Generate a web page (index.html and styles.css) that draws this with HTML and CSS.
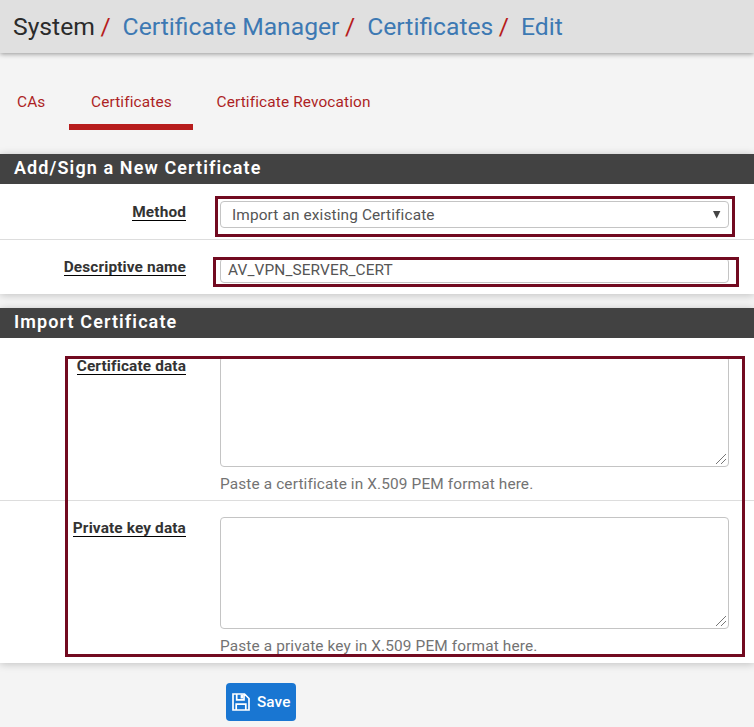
FILE: index.html
```html
<!DOCTYPE html>
<html lang="en">
<head>
<meta charset="utf-8">
<title>System: Certificate Manager</title>
<link rel="stylesheet" href="styles.css">
</head>
<body>
<header class="page-header">
  <ol class="breadcrumb">
    <li>System</li>
    <li><a>Certificate Manager</a></li>
    <li><a>Certificates</a></li>
    <li><a>Edit</a></li>
  </ol>
</header>
<nav class="tabs">
  <a class="tab">CAs</a>
  <a class="tab active">Certificates</a>
  <a class="tab">Certificate Revocation</a>
</nav>
<form>
  <section class="panel panel-new">
    <h2>Add/Sign a New Certificate</h2>
    <div class="row row-method">
      <label><span>Method</span></label>
      <div class="select"><span>Import an existing Certificate</span>
        <svg class="arrow" width="8" height="8" viewBox="0 0 8 8"><path d="M0 0H7.4L3.7 7.4Z" fill="#444"/></svg>
      </div>
      <div class="mark mark-method"></div>
    </div>
    <div class="row row-name">
      <label><span>Descriptive name</span></label>
      <div class="input">AV_VPN_SERVER_CERT</div>
      <div class="mark mark-name"></div>
    </div>
  </section>
  <section class="panel panel-import">
    <h2>Import Certificate</h2>
    <div class="row row-cert">
      <label><span>Certificate data</span></label>
      <div>
        <div class="textarea"><svg width="12" height="12" viewBox="0 0 12 12"><path d="M1 11L11 1M6 11L11 6" stroke="#777" fill="none"/></svg></div>
        <p class="help">Paste a certificate in X.509 PEM format here.</p>
      </div>
    </div>
    <div class="row row-key">
      <label><span>Private key data</span></label>
      <div>
        <div class="textarea tall"><svg width="12" height="12" viewBox="0 0 12 12"><path d="M1 11L11 1M6 11L11 6" stroke="#777" fill="none"/></svg></div>
        <p class="help">Paste a private key in X.509 PEM format here.</p>
      </div>
    </div>
    <div class="mark mark-import"></div>
  </section>
  <button class="save" type="button">
    <svg width="18" height="18" viewBox="0 0 18 18" fill="none" stroke="#fff" stroke-width="1.7"><path d="M1 1H12.5L17 5.5V17H1ZM4.2 17V11.2H13.8V17M4.7 1V6.8H12V1"/><path d="M9.8 1.5V5.5" stroke-width="2.4"/></svg>
    <span>Save</span>
  </button>
</form>
</body>
</html>
```
FILE: styles.css
```css
* { box-sizing: border-box; }
body {
  margin: 0;
  height: 727px;
  overflow: hidden;
  background: #f4f4f4;
  color: #2b2b2b;
  font: 15.4px/20px Roboto, sans-serif;
  letter-spacing: .13px;
}
.page-header {
  height: 53px;
  padding: 11px 13px;
  background: #e0e0e0;
  box-shadow: 0 1px 5px rgba(0, 0, 0, .4);
}
.breadcrumb {
  display: flex;
  margin: 0;
  padding: 0;
  list-style: none;
  font-size: 24.7px;
  line-height: 31px;
  letter-spacing: 0;
  white-space: nowrap;
}
.breadcrumb li + li::before {
  content: "/";
  color: #b71c1c;
  padding: 0 12px 0 5.5px;
}
.breadcrumb a { color: #3d79b3; }
.tabs {
  display: flex;
  height: 101px;
  padding-top: 33px;
  align-items: flex-start;
}
.tab {
  height: 44px;
  padding: 6px 23px 0 23.5px;
  color: #ad1f24;
  white-space: nowrap;
}
.tab:first-child { width: 69px; padding: 6px 0 0 17px; }
.tab.active { width: 124px; padding: 6px 0 0 22px; border-bottom: 6px solid #b71c1c; }
.panel {
  position: relative;
  background: #fff;
  box-shadow: 0 1px 8px rgba(0, 0, 0, .22);
}
.panel-new { height: 140px; margin-bottom: 14px; }
.panel-import { height: 355px; }
h2 {
  height: 30px;
  margin: 0;
  padding-left: 14px;
  background: #424242;
  color: #fff;
  font-size: 18px;
  font-weight: 600;
  line-height: 28px;
  letter-spacing: 1.1px;
}
.row {
  position: relative;
  display: grid;
  grid-template-columns: 186px 509px;
  column-gap: 34px;
  align-items: start;
}
.row label {
  text-align: right;
  font-weight: 700;
  line-height: 18px;
  color: #333;
}
.row label span {
  display: inline-block;
  height: 18px;
  border-bottom: 1px solid #000;
}
.row-method { height: 56px; padding-top: 17px; border-bottom: 1px solid #ddd; }
.row-method label { padding-top: 2px; }
.row-name { padding-top: 18px; }
.row-cert { height: 163px; padding-top: 18px; border-bottom: 1px solid #ddd; }
.row-cert label { padding-top: 1px; }
.row-key { padding-top: 16px; }
.row-key label { padding-top: 2px; }
.select, .input, .textarea {
  border: 1px solid #c4c4c4;
  border-radius: 4px;
  background: #fff;
  color: #555;
}
.select {
  display: flex;
  align-items: center;
  justify-content: space-between;
  height: 27px;
  padding: 0 7px 0 11px;
}
.input { height: 25px; padding-left: 7px; line-height: 23px; }
.textarea {
  display: flex;
  justify-content: flex-end;
  align-items: flex-end;
  height: 111px;
  padding: 1px;
}
.textarea.tall { height: 112px; }
.help { margin: 7px 0 0; color: #737373; }
.mark { position: absolute; border: 3px solid #720a20; }
.mark-method { left: 215px; top: 12px; width: 520px; height: 41px; }
.mark-name { left: 213px; top: 17px; width: 526px; height: 30px; }
.mark-import { left: 65px; top: 48px; width: 680px; height: 301px; }
.save {
  display: flex;
  align-items: center;
  gap: 7px;
  width: 70px;
  height: 38px;
  margin: 20px 0 0 226px;
  padding: 0 0 0 6px;
  border: 0;
  border-radius: 4px;
  background: #1976d2;
  color: #fff;
  font: 500 15.3px/20px Roboto, sans-serif;
  letter-spacing: .1px;
}
```
